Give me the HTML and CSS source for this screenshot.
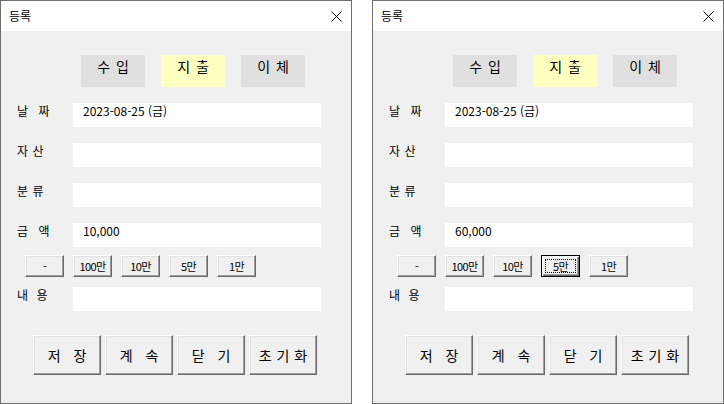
FILE: index.html
```html
<!DOCTYPE html>
<html lang="ko">
<head>
<meta charset="utf-8">
<title>등록</title>
<link rel="stylesheet" href="styles.css">
</head>
<body>
<div class="desk">
  <section class="win">
    <header class="titlebar">
      <span class="title">등록</span>
      <svg class="close" width="11" height="11" viewBox="0 0 11 11"><path d="M0.5 0.5 L10.5 10.5 M10.5 0.5 L0.5 10.5" stroke="#000" stroke-width="1" fill="none"/></svg>
    </header>
    <div class="body">
      <div class="tabs">
        <div class="tab">수 입</div>
        <div class="tab sel">지 출</div>
        <div class="tab">이 체</div>
      </div>
      <div class="row"><span class="lbl sp7">날 짜</span><div class="field">2023-08-25 (금)</div></div>
      <div class="row"><span class="lbl sp1">자 산</span><div class="field"></div></div>
      <div class="row"><span class="lbl sp1">분 류</span><div class="field"></div></div>
      <div class="row"><span class="lbl sp7">금 액</span><div class="field">10,000</div></div>
      <div class="quick">
        <button class="btn sm">-</button>
        <button class="btn sm">100만</button>
        <button class="btn sm">10만</button>
        <button class="btn sm">5만</button>
        <button class="btn sm">1만</button>
      </div>
      <div class="row row-memo"><span class="lbl sp5">내 용</span><div class="field"></div></div>
      <div class="actions">
        <button class="btn lg wide">저 장</button>
        <button class="btn lg wide">계 속</button>
        <button class="btn lg wide">닫 기</button>
        <button class="btn lg tight">초 기 화</button>
      </div>
    </div>
  </section>
  <section class="win">
    <header class="titlebar">
      <span class="title">등록</span>
      <svg class="close" width="11" height="11" viewBox="0 0 11 11"><path d="M0.5 0.5 L10.5 10.5 M10.5 0.5 L0.5 10.5" stroke="#000" stroke-width="1" fill="none"/></svg>
    </header>
    <div class="body">
      <div class="tabs">
        <div class="tab">수 입</div>
        <div class="tab sel">지 출</div>
        <div class="tab">이 체</div>
      </div>
      <div class="row"><span class="lbl sp7">날 짜</span><div class="field">2023-08-25 (금)</div></div>
      <div class="row"><span class="lbl sp1">자 산</span><div class="field"></div></div>
      <div class="row"><span class="lbl sp1">분 류</span><div class="field"></div></div>
      <div class="row"><span class="lbl sp7">금 액</span><div class="field">60,000</div></div>
      <div class="quick">
        <button class="btn sm">-</button>
        <button class="btn sm">100만</button>
        <button class="btn sm">10만</button>
        <button class="btn sm focus">5만</button>
        <button class="btn sm">1만</button>
      </div>
      <div class="row row-memo"><span class="lbl sp5">내 용</span><div class="field"></div></div>
      <div class="actions">
        <button class="btn lg wide">저 장</button>
        <button class="btn lg wide">계 속</button>
        <button class="btn lg wide">닫 기</button>
        <button class="btn lg tight">초 기 화</button>
      </div>
    </div>
  </section>
</div>
</body>
</html>
```
FILE: styles.css
```css
* { box-sizing: border-box; }
html, body { margin: 0; padding: 0; }
body {
  background: #ffffff;
  font-family: "Noto Sans CJK KR", "Noto Sans", sans-serif;
  color: #000;
  width: 724px;
  height: 404px;
  overflow: hidden;
}
.desk {
  display: flex;
  gap: 20px;
}
.win {
  width: 352px;
  height: 404px;
  border: 1px solid #6e6e6e;
  background: #f0f0f0;
  display: flex;
  flex-direction: column;
}
.titlebar {
  height: 30px;
  background: #ffffff;
  display: flex;
  align-items: center;
  justify-content: space-between;
  padding: 0 9px 0 8px;
  flex: none;
}
.title {
  font-size: 12px;
  line-height: 14px;
}
.close { display: block; }
.body {
  padding-top: 24px;
  display: flex;
  flex-direction: column;
}
.tabs {
  display: flex;
  gap: 16px;
  padding-left: 80px;
}
.tab {
  width: 64px;
  height: 32px;
  background: #e0e0e0;
  font-size: 14px;
  line-height: 18px;
  padding-top: 2px;
  text-align: center;
  word-spacing: 2px;
}
.tab.sel { background: #ffffc0; }
.row {
  display: flex;
  align-items: flex-start;
  margin-top: 16px;
  padding-left: 16px;
  height: 24px;
}
.row-memo { margin-top: 10px; }
.lbl {
  width: 56px;
  font-size: 12px;
  line-height: 16px;
  white-space: pre;
}
.sp1 { word-spacing: 1px; }
.sp5 { word-spacing: 5px; }
.sp7 { word-spacing: 7px; }
.field {
  width: 248px;
  height: 24px;
  background: #ffffff;
  font-size: 12px;
  line-height: 14px;
  padding: 1px 0 0 10px;
}
.quick {
  display: flex;
  gap: 9px;
  margin-top: 8px;
  padding-left: 24px;
}
.btn {
  font-family: "Noto Sans CJK KR", "Noto Sans", sans-serif;
  color: #000;
  background: #f0f0f0;
  border: 1px solid;
  border-color: #ffffff #696969 #696969 #ffffff;
  box-shadow: inset -1px -1px 0 #a0a0a0, inset 1px 1px 0 #e3e3e3;
  padding: 0;
  margin: 0;
  display: flex;
  align-items: center;
  justify-content: center;
}
.btn.sm {
  width: 39px;
  height: 22px;
  font-size: 11px;
  letter-spacing: -0.6px;
}
.btn.focus {
  border-color: #000;
  box-shadow: inset 1px 1px 0 #ffffff, inset -1px -1px 0 #696969, inset -2px -2px 0 #a0a0a0;
  outline: 1px dotted #000;
  outline-offset: -5px;
}
.actions {
  display: flex;
  gap: 4px;
  margin-top: 24px;
  padding-left: 32px;
}
.btn.lg {
  width: 68px;
  height: 40px;
  font-size: 14px;
}
.btn.wide { word-spacing: 9px; }
.btn.tight { word-spacing: 1px; }
```
